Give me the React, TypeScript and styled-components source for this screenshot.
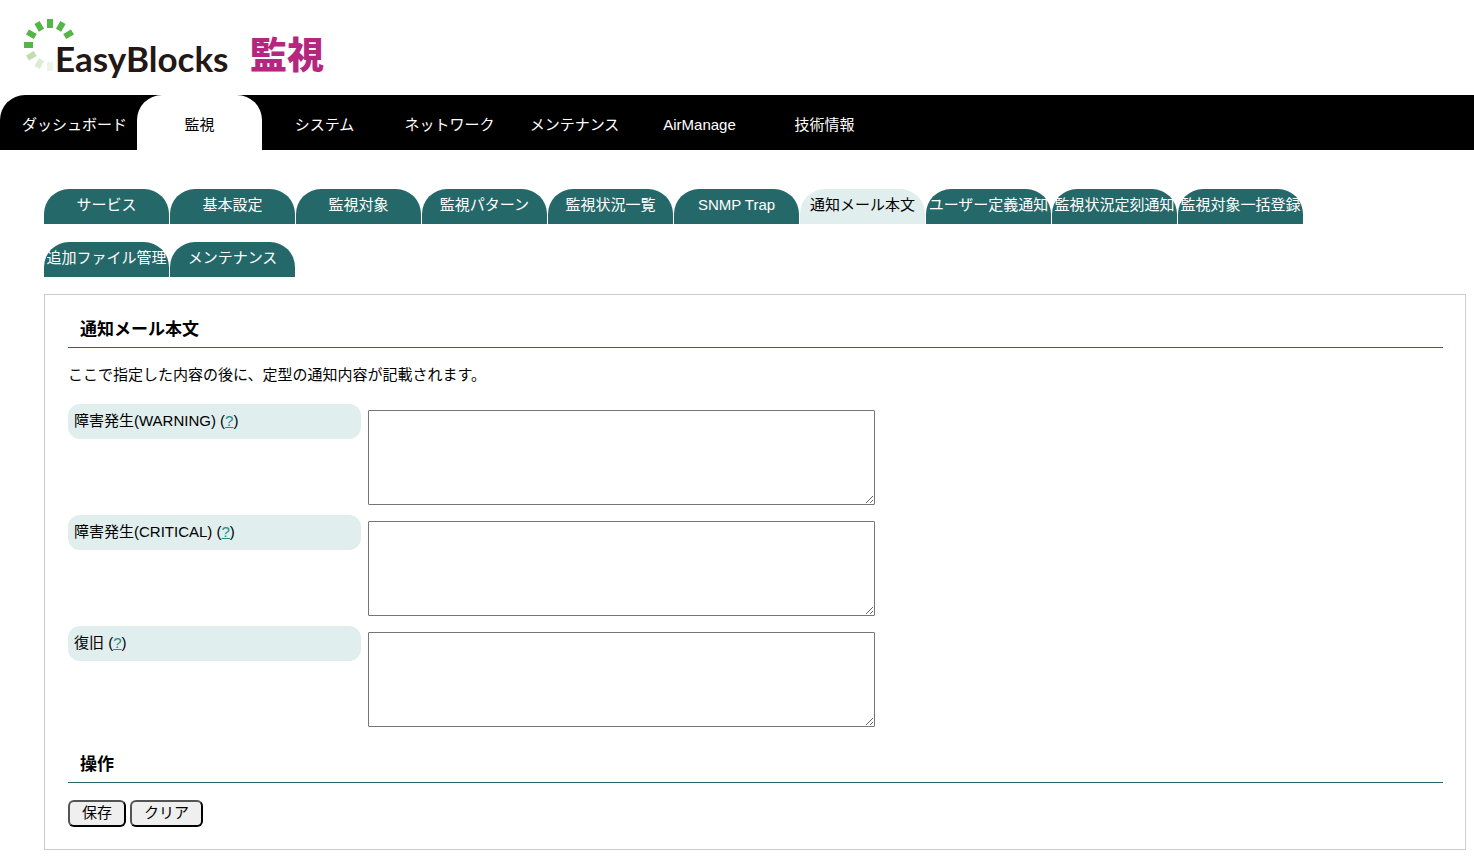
import React from "react";
import styled, { createGlobalStyle } from "styled-components";

const GlobalStyle = createGlobalStyle`
  body {
    margin: 0;
    background: #fff;
    color: #000;
    font-family: "Liberation Sans", "Noto Sans CJK JP", sans-serif;
    font-size: 15px;
    line-height: 24px;
  }
`;

const Header = styled.header`
  display: flex;
  height: 95px;
  padding-left: 24px;
`;

const Burst = styled.svg`
  flex: none;
  width: 52px;
  height: 52px;
  margin: 19px -21px 0 0;
`;

const Brand = styled.span`
  width: 174px;
  padding-top: 34px;
  color: #231815;
  font: 700 35px/48px Lato, sans-serif;
`;

const Product = styled.span`
  margin-left: 21px;
  padding-top: 29px;
  color: #b5267f;
  font: 900 37px/48px "Noto Sans CJK JP", sans-serif;
`;

const MainNav = styled.nav`
  display: flex;
  height: 55px;
  padding-left: 12px;
  background: #000;
  border-top-left-radius: 25px;
`;

const NavLink = styled.a<{ $active?: boolean }>`
  width: 125px;
  padding-top: 18px;
  box-sizing: border-box;
  border-radius: 25px 25px 0 0;
  background: ${(p) => (p.$active ? "#fff" : "#000")};
  color: ${(p) => (p.$active ? "#000" : "#fff")};
  text-align: center;
  text-decoration: none;
  white-space: nowrap;
`;

const Content = styled.main`
  padding: 39px 8px 7px 44px;
`;

const SubNav = styled.nav`
  display: flex;
  flex-wrap: wrap;
  gap: 18px 1px;
  margin: 0 100px 17px 0;
`;

const SubLink = styled.a<{ $active?: boolean }>`
  display: flex;
  justify-content: center;
  width: 125px;
  height: 35px;
  padding-top: 4px;
  box-sizing: border-box;
  border-radius: 25px 25px 0 0;
  background: ${(p) => (p.$active ? "#e0eeed" : "#256869")};
  color: ${(p) => (p.$active ? "#000" : "#fff")};
  text-decoration: none;
  white-space: nowrap;
`;

const Panel = styled.section`
  padding: 20px 22px 22px 23px;
  border: 1px solid #ccc;
`;

const Heading = styled.h2`
  margin: 0 0 15px;
  padding: 3px 12px 5px;
  border-bottom: 1px solid #256869;
  font-size: 17px;
  line-height: 24px;
`;

const Lead = styled.p`
  margin: 0 0 17px;
`;

const Fields = styled.div`
  margin-bottom: 13px;
`;

const Field = styled.div`
  display: flex;
  align-items: flex-start;
  gap: 7px;
  height: 111px;
`;

const FieldLabel = styled.div`
  width: 293px;
  height: 35px;
  padding: 5px 6px;
  box-sizing: border-box;
  border-radius: 12px;
  background: #e0eeed;
`;

const Help = styled.a`
  color: #1f8a8c;
`;

const Body = styled.textarea`
  width: 507px;
  height: 95px;
  margin: 6px 0 0;
  padding: 2px;
  box-sizing: border-box;
  border: 1px solid #767676;
  border-radius: 1px;
  background: #fff;
  font: inherit;
`;

const Actions = styled.div`
  display: flex;
  gap: 4px;
  padding-top: 2px;
`;

const Button = styled.button`
  height: 27px;
  padding: 0 12px 2px;
  border: 2px outset #000;
  border-radius: 6px;
  background: #efefef;
  color: #000;
  font: inherit;
  line-height: 21px;
`;

const rays = [
  { angle: -180, color: "#edf5e8" },
  { angle: -150, color: "#dcecd3" },
  { angle: -120, color: "#bfdfb0" },
  { angle: -90, color: "#56b548" },
  { angle: -60, color: "#56b548" },
  { angle: -30, color: "#56b548" },
  { angle: 0, color: "#56b548" },
  { angle: 30, color: "#56b548" },
  { angle: 60, color: "#56b548" },
];

const mainItems = ["ダッシュボード", "監視", "システム", "ネットワーク", "メンテナンス", "AirManage", "技術情報"];

const subItems = [
  "サービス",
  "基本設定",
  "監視対象",
  "監視パターン",
  "監視状況一覧",
  "SNMP Trap",
  "通知メール本文",
  "ユーザー定義通知",
  "監視状況定刻通知",
  "監視対象一括登録",
  "追加ファイル管理",
  "メンテナンス",
];

const fields = [
  { id: "warning", label: "障害発生(WARNING)" },
  { id: "critical", label: "障害発生(CRITICAL)" },
  { id: "recovery", label: "復旧" },
];

export default function App() {
  return (
    <>
      <GlobalStyle />
      <Header>
        <Burst viewBox="0 0 52 52" aria-hidden="true">
          {rays.map((r) => (
            <rect key={r.angle} x="23" y="0" width="6" height="9" fill={r.color} transform={`rotate(${r.angle} 26 26)`} />
          ))}
        </Burst>
        <Brand>EasyBlocks</Brand>
        <Product>監視</Product>
      </Header>
      <MainNav>
        {mainItems.map((item) => (
          <NavLink key={item} href="#" $active={item === "監視"}>
            {item}
          </NavLink>
        ))}
      </MainNav>
      <Content>
        <SubNav>
          {subItems.map((item) => (
            <SubLink key={item} href="#" $active={item === "通知メール本文"}>
              {item}
            </SubLink>
          ))}
        </SubNav>
        <Panel>
          <form onSubmit={(e) => e.preventDefault()}>
            <Heading>通知メール本文</Heading>
            <Lead>ここで指定した内容の後に、定型の通知内容が記載されます。</Lead>
            <Fields>
              {fields.map((f) => (
                <Field key={f.id}>
                  <FieldLabel>
                    <label htmlFor={f.id}>{f.label}</label> (<Help href="#">?</Help>)
                  </FieldLabel>
                  <Body id={f.id} />
                </Field>
              ))}
            </Fields>
            <Heading>操作</Heading>
            <Actions>
              <Button type="submit">保存</Button>
              <Button type="reset">クリア</Button>
            </Actions>
          </form>
        </Panel>
      </Content>
    </>
  );
}
